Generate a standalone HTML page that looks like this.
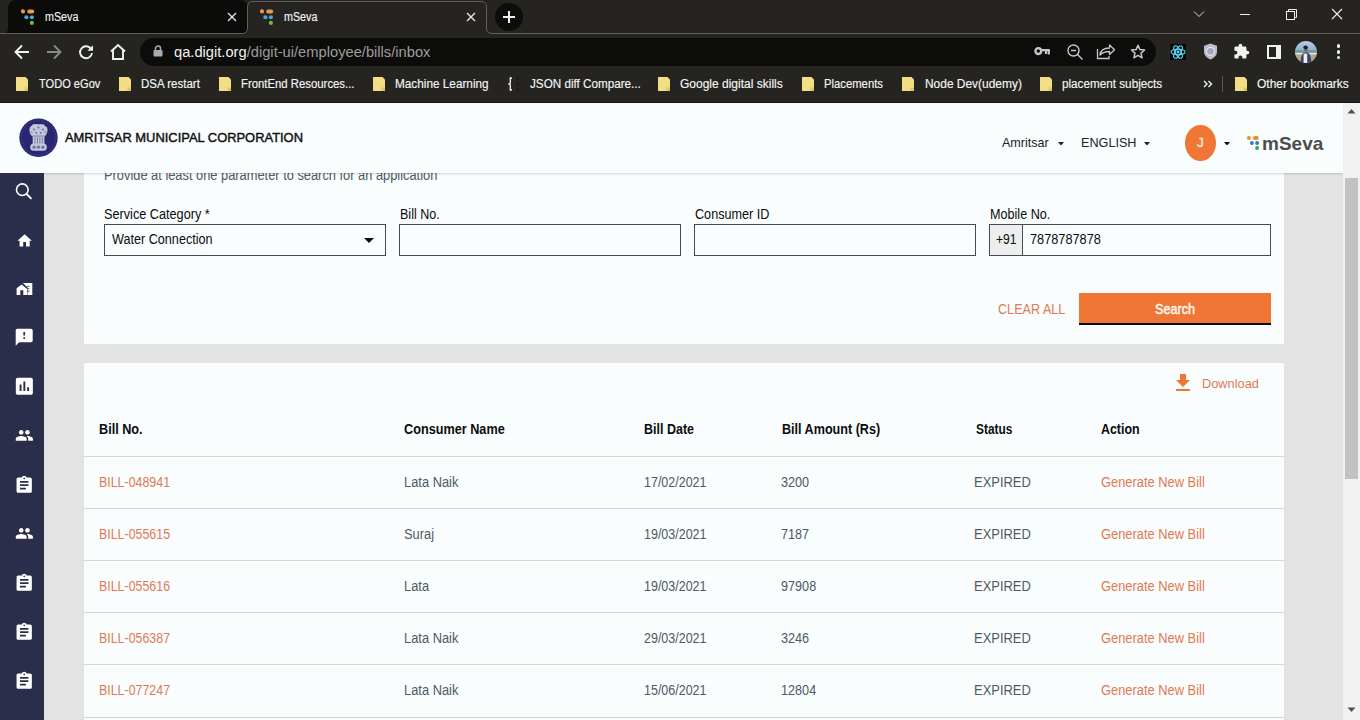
<!DOCTYPE html><html><head><meta charset="utf-8"><style>
html,body{margin:0;padding:0;}
body{width:1360px;height:720px;overflow:hidden;position:relative;background:#252420;font-family:"Liberation Sans", sans-serif;}
.t{position:absolute;line-height:1;white-space:nowrap;}
.r{position:absolute;}

</style></head><body>
<div class="r" style="left:0px;top:0px;width:1360px;height:34px;background:#252420"></div>
<div class="r" style="left:0px;top:34px;width:1360px;height:68px;background:#252420"></div>
<svg class="r" style="left:0px;top:0px;" width="1360" height="36" viewBox="0 0 1360 36"><path d="M3 33.5Q8 33.5 8 28.5V8Q8 0 16 0H240Q247.5 0 247.5 7.5V28Q247.5 33.5 242 33.5Z" fill="#0b0b0a"/><path d="M0 33.5H242Q247.5 33.5 247.5 28V7Q247.5 1.5 253 1.5H481Q486.5 1.5 486.5 7V28Q486.5 33.5 492 33.5H1360" stroke="#5f5e59" stroke-width="1" fill="none"/></svg>
<div class="r" style="left:0px;top:102px;width:1360px;height:1px;background:#161614"></div>
<svg class="r" style="left:21px;top:8px;" width="16" height="18" viewBox="0 0 16 18"><circle cx="2" cy="3.4" r="2.05" fill="#eb9a4c"/><rect x="6.2" y="1.4" width="7" height="4" rx="2" fill="#eb9a4c"/><circle cx="5.4" cy="9.2" r="2.05" fill="#4ba6dc"/><circle cx="10.9" cy="9.2" r="2.05" fill="#4ba6dc"/><circle cx="10.9" cy="14.9" r="2.05" fill="#6cbd45"/></svg>
<svg class="r" style="left:260px;top:8px;" width="16" height="18" viewBox="0 0 16 18"><circle cx="2" cy="3.4" r="2.05" fill="#eb9a4c"/><rect x="6.2" y="1.4" width="7" height="4" rx="2" fill="#eb9a4c"/><circle cx="5.4" cy="9.2" r="2.05" fill="#4ba6dc"/><circle cx="10.9" cy="9.2" r="2.05" fill="#4ba6dc"/><circle cx="10.9" cy="14.9" r="2.05" fill="#6cbd45"/></svg>
<div class="t" id="tab1" style="left:44.51px;top:10.84px;font-size:12px;color:#f0f0f0;font-weight:normal;transform:scaleX(0.8951);transform-origin:0 0;-webkit-text-stroke:0.15px #f0f0f0">mSeva</div>
<div class="t" id="tab2" style="left:283.51px;top:10.84px;font-size:12px;color:#f4f4f4;font-weight:normal;transform:scaleX(0.8951);transform-origin:0 0;-webkit-text-stroke:0.15px #f4f4f4">mSeva</div>
<svg class="r" style="left:227px;top:12px;" width="10" height="10" viewBox="0 0 10 10"><path d="M1 1L9 9M9 1L1 9" stroke="#e6e6e6" stroke-width="1.4"/></svg>
<svg class="r" style="left:466px;top:12px;" width="10" height="10" viewBox="0 0 10 10"><path d="M1 1L9 9M9 1L1 9" stroke="#e6e6e6" stroke-width="1.4"/></svg>
<svg class="r" style="left:495px;top:3px;" width="28" height="28" viewBox="0 0 28 28"><circle cx="14" cy="14" r="14" fill="#0d0d0c"/><path d="M14 8v12M8 14h12" stroke="#f0f0f0" stroke-width="2"/></svg>
<svg class="r" style="left:1193px;top:10px;" width="12" height="8" viewBox="0 0 12 8"><path d="M1 1.5L6 6.5L11 1.5" stroke="#d8d8d8" stroke-width="1" fill="none"/></svg>
<div class="r" style="left:1240px;top:14px;width:10px;height:1px;background:#f0f0f0"></div>
<svg class="r" style="left:1285px;top:8px;" width="13" height="13" viewBox="0 0 13 13"><rect x="1.5" y="3.5" width="8" height="8" stroke="#f0f0f0" fill="none"/><path d="M3.5 3.5V1.5h8v8h-2" stroke="#f0f0f0" fill="none"/></svg>
<svg class="r" style="left:1331px;top:8px;" width="12" height="12" viewBox="0 0 12 12"><path d="M1 1L11 11M11 1L1 11" stroke="#f0f0f0" stroke-width="1.1"/></svg>
<svg class="r" style="left:13px;top:43px;" width="18" height="18" viewBox="0 0 18 18"><path d="M16 9H3M9 2.5L2.5 9L9 15.5" stroke="#f2f2f2" stroke-width="1.9" fill="none"/></svg>
<svg class="r" style="left:45px;top:43px;" width="18" height="18" viewBox="0 0 18 18"><path d="M2 9H15M9 2.5L15.5 9L9 15.5" stroke="#8a8a88" stroke-width="1.9" fill="none"/></svg>
<svg class="r" style="left:77px;top:43px;" width="18" height="18" viewBox="0 0 18 18"><path d="M14.2 6.2A6 6 0 1 0 15 10" stroke="#f2f2f2" stroke-width="1.9" fill="none"/><path d="M16 2.2V7.8H10.4Z" fill="#f2f2f2"/></svg>
<svg class="r" style="left:109px;top:43px;" width="18" height="18" viewBox="0 0 18 18"><path d="M2 8.5L9 2L16 8.5M4 7V16H14V7" stroke="#f2f2f2" stroke-width="1.9" fill="none" stroke-linejoin="miter"/></svg>
<div class="r" style="left:140px;top:38px;width:1016px;height:28px;background:#0c0c0b;border-radius:14px"></div>
<svg class="r" style="left:153px;top:45px;" width="10" height="12" viewBox="0 0 10 12"><path d="M2.5 5V3.5a2.5 2.5 0 0 1 5 0V5" stroke="#a9aaad" stroke-width="1.5" fill="none"/><rect x="0.5" y="5" width="9" height="6.5" rx="1" fill="#a9aaad"/></svg>
<div class="t" id="url" style="left:174.00px;top:45.15px;font-size:14px;color:#f2f2f2;font-weight:normal;transform:scaleX(1.0492);transform-origin:0 0;"><span style="color:#f2f2f2">qa.digit.org</span><span style="color:#9d9d9b">/digit-ui/employee/bills/inbox</span></div>
<svg class="r" style="left:1034px;top:46px;" width="16" height="11" viewBox="0 0 16 11"><circle cx="4.3" cy="5.1" r="2.9" stroke="#c8c8c8" stroke-width="2.3" fill="none"/><path d="M6.5 4.2H14.8V8.5M12 4.5V8" stroke="#c8c8c8" stroke-width="2.2" fill="none"/></svg>
<svg class="r" style="left:1066px;top:43px;" width="18" height="18" viewBox="0 0 18 18"><circle cx="7.5" cy="7.5" r="5.5" stroke="#c8c8c8" stroke-width="1.4" fill="none"/><path d="M11.5 11.5L16.5 16.5M5 7.5H10" stroke="#c8c8c8" stroke-width="1.4"/></svg>
<svg class="r" style="left:1096px;top:42px;" width="20" height="18" viewBox="0 0 20 18"><path d="M1.5 7V16.5H13V14" stroke="#c8c8c8" stroke-width="1.3" fill="none"/><path d="M4 13C4.5 8 8 6 13.5 6V3L18.5 7.8L13.5 12.5V9.5C9 9.5 6.5 10.5 4 13Z" stroke="#c8c8c8" stroke-width="1.3" fill="none" stroke-linejoin="round"/></svg>
<svg class="r" style="left:1130px;top:44px;" width="16" height="16" viewBox="0 0 16 16"><path d="M8 1.2L9.9 5.6L14.6 6L11 9.1L12.1 13.8L8 11.3L3.9 13.8L5 9.1L1.4 6L6.1 5.6Z" stroke="#c8c8c8" stroke-width="1.5" fill="none" stroke-linejoin="round"/></svg>
<div class="r" style="left:1170px;top:44px;width:16px;height:16px;background:#0a0a0a"></div>
<svg class="r" style="left:1170px;top:44px;" width="16" height="16" viewBox="0 0 16 16"><g stroke="#61dafb" stroke-width="1.1" fill="none"><ellipse cx="8" cy="8" rx="7" ry="2.7"/><ellipse cx="8" cy="8" rx="7" ry="2.7" transform="rotate(60 8 8)"/><ellipse cx="8" cy="8" rx="7" ry="2.7" transform="rotate(120 8 8)"/></g><circle cx="8" cy="8" r="1.4" fill="#61dafb"/></svg>
<svg class="r" style="left:1203px;top:43px;" width="15" height="17" viewBox="0 0 15 17"><path d="M7.5 0.5L14 2.8V8.5C14 12.5 11 15 7.5 16.5C4 15 1 12.5 1 8.5V2.8Z" fill="#b9bccb"/><circle cx="7.5" cy="8.3" r="4" stroke="#e2e4ee" stroke-width="1.2" fill="#a3a7ba"/></svg>
<svg class="r" style="left:1233px;top:43px;" width="17" height="17" viewBox="0 0 24 24"><path fill="#f2f2f2" d="M20.5 11H19V7c0-1.1-.9-2-2-2h-4V3.5C13 2.12 11.880 1 10.5 1S8 2.12 8 3.5V5H4c-1.1 0-1.99.9-1.99 2v3.8H3.5c1.49 0 2.7 1.21 2.7 2.7s-1.21 2.7-2.7 2.7H2V20c0 1.1.9 2 2 2h3.8v-1.5c0-1.49 1.21-2.7 2.7-2.7 1.49 0 2.7 1.21 2.7 2.7V22H17c1.1 0 2-.9 2-2v-4h1.5c1.38 0 2.5-1.12 2.5-2.5S21.88 11 20.5 11z"/></svg>
<svg class="r" style="left:1267px;top:45px;" width="14" height="14" viewBox="0 0 14 14"><rect x="1" y="1" width="12" height="12" stroke="#f2f2f2" stroke-width="2" fill="none"/><rect x="9" y="1" width="4" height="12" fill="#f2f2f2"/></svg>
<svg class="r" style="left:1295px;top:41px;" width="22" height="22" viewBox="0 0 22 22"><defs><clipPath id="pc"><circle cx="11" cy="11" r="11"/></clipPath><linearGradient id="sky" x1="0" y1="0" x2="0" y2="1"><stop offset="0" stop-color="#b4cde8"/><stop offset="1" stop-color="#8fb0cf"/></linearGradient></defs><g clip-path="url(#pc)"><rect width="22" height="10" fill="url(#sky)"/><rect y="9" width="22" height="2.6" fill="#6f9ca2"/><rect y="11.6" width="22" height="2.2" fill="#e6ecee"/><rect y="13.8" width="22" height="8.2" fill="#b3a58f"/><path d="M5.6 22C5.8 15.5 6.8 12.2 9.3 11.4H12.4C15 12.2 16 15.5 16.4 22Z" fill="#3b4670"/><rect x="8.6" y="12.6" width="3.6" height="9.4" fill="#eeeeee"/><ellipse cx="10.9" cy="8.6" rx="1.7" ry="2.1" fill="#7a6458"/><ellipse cx="10.6" cy="6.4" rx="2.3" ry="1.8" fill="#25201d"/></g></svg>
<div class="r" style="left:1336.5px;top:44.4px;width:3.2px;height:3.2px;border-radius:50%;background:#f2f2f2"></div>
<div class="r" style="left:1336.5px;top:50.4px;width:3.2px;height:3.2px;border-radius:50%;background:#f2f2f2"></div>
<div class="r" style="left:1336.5px;top:55.9px;width:3.2px;height:3.2px;border-radius:50%;background:#f2f2f2"></div>
<svg class="r" style="left:16px;top:77px;" width="12" height="14" viewBox="0 0 12 14"><path d="M0 0H9.5L12 2.5V14H0Z" fill="#f3dd85"/><path d="M8.5 10.5H12V14H8.5Z" fill="#e0c468"/></svg>
<div class="t" id="bm0" style="left:39.36px;top:77.84px;font-size:12px;color:#f4f4f4;font-weight:normal;transform:scaleX(0.9228);transform-origin:0 0;-webkit-text-stroke:0.15px #f4f4f4">TODO eGov</div>
<svg class="r" style="left:119px;top:77px;" width="12" height="14" viewBox="0 0 12 14"><path d="M0 0H9.5L12 2.5V14H0Z" fill="#f3dd85"/><path d="M8.5 10.5H12V14H8.5Z" fill="#e0c468"/></svg>
<div class="t" id="bm1" style="left:141.00px;top:77.84px;font-size:12px;color:#f4f4f4;font-weight:normal;transform:scaleX(0.9598);transform-origin:0 0;-webkit-text-stroke:0.15px #f4f4f4">DSA restart</div>
<svg class="r" style="left:219px;top:77px;" width="12" height="14" viewBox="0 0 12 14"><path d="M0 0H9.5L12 2.5V14H0Z" fill="#f3dd85"/><path d="M8.5 10.5H12V14H8.5Z" fill="#e0c468"/></svg>
<div class="t" id="bm2" style="left:241.24px;top:77.84px;font-size:12px;color:#f4f4f4;font-weight:normal;transform:scaleX(0.9454);transform-origin:0 0;-webkit-text-stroke:0.15px #f4f4f4">FrontEnd Resources...</div>
<svg class="r" style="left:373px;top:77px;" width="12" height="14" viewBox="0 0 12 14"><path d="M0 0H9.5L12 2.5V14H0Z" fill="#f3dd85"/><path d="M8.5 10.5H12V14H8.5Z" fill="#e0c468"/></svg>
<div class="t" id="bm3" style="left:395.01px;top:77.84px;font-size:12px;color:#f4f4f4;font-weight:normal;transform:scaleX(0.9816);transform-origin:0 0;-webkit-text-stroke:0.15px #f4f4f4">Machine Learning</div>
<div class="t" id="bm4" style="left:530.00px;top:77.84px;font-size:12px;color:#f4f4f4;font-weight:normal;transform:scaleX(0.9735);transform-origin:0 0;-webkit-text-stroke:0.15px #f4f4f4">JSON diff Compare...</div>
<svg class="r" style="left:658px;top:77px;" width="12" height="14" viewBox="0 0 12 14"><path d="M0 0H9.5L12 2.5V14H0Z" fill="#f3dd85"/><path d="M8.5 10.5H12V14H8.5Z" fill="#e0c468"/></svg>
<div class="t" id="bm5" style="left:680.00px;top:77.84px;font-size:12px;color:#f4f4f4;font-weight:normal;-webkit-text-stroke:0.15px #f4f4f4">Google digital skills</div>
<svg class="r" style="left:802px;top:77px;" width="12" height="14" viewBox="0 0 12 14"><path d="M0 0H9.5L12 2.5V14H0Z" fill="#f3dd85"/><path d="M8.5 10.5H12V14H8.5Z" fill="#e0c468"/></svg>
<div class="t" id="bm6" style="left:824.02px;top:77.84px;font-size:12px;color:#f4f4f4;font-weight:normal;transform:scaleX(0.9398);transform-origin:0 0;-webkit-text-stroke:0.15px #f4f4f4">Placements</div>
<svg class="r" style="left:902px;top:77px;" width="12" height="14" viewBox="0 0 12 14"><path d="M0 0H9.5L12 2.5V14H0Z" fill="#f3dd85"/><path d="M8.5 10.5H12V14H8.5Z" fill="#e0c468"/></svg>
<div class="t" id="bm7" style="left:925.00px;top:77.84px;font-size:12px;color:#f4f4f4;font-weight:normal;transform:scaleX(0.9949);transform-origin:0 0;-webkit-text-stroke:0.15px #f4f4f4">Node Dev(udemy)</div>
<svg class="r" style="left:1040px;top:77px;" width="12" height="14" viewBox="0 0 12 14"><path d="M0 0H9.5L12 2.5V14H0Z" fill="#f3dd85"/><path d="M8.5 10.5H12V14H8.5Z" fill="#e0c468"/></svg>
<div class="t" id="bm8" style="left:1062.01px;top:77.84px;font-size:12px;color:#f4f4f4;font-weight:normal;transform:scaleX(0.9756);transform-origin:0 0;-webkit-text-stroke:0.15px #f4f4f4">placement subjects</div>
<svg class="r" style="left:1235px;top:77px;" width="12" height="14" viewBox="0 0 12 14"><path d="M0 0H9.5L12 2.5V14H0Z" fill="#f3dd85"/><path d="M8.5 10.5H12V14H8.5Z" fill="#e0c468"/></svg>
<div class="t" id="bm9" style="left:1257.00px;top:77.84px;font-size:12px;color:#f4f4f4;font-weight:normal;transform:scaleX(0.9973);transform-origin:0 0;-webkit-text-stroke:0.15px #f4f4f4">Other bookmarks</div>
<svg class="r" style="left:508px;top:77px;" width="12" height="14" viewBox="0 0 12 14"><path d="M4 1H2.3V6.2L1 7L2.3 7.8V13H4" stroke="#f2f2f2" stroke-width="1.3" fill="none"/><g fill="#000"><rect x="9" y="1.2" width="1.2" height="1.2"/><rect x="9" y="6.5" width="1.2" height="1.2"/><rect x="9" y="12" width="1.2" height="1.2"/></g></svg>
<svg class="r" style="left:1203px;top:80px;" width="10" height="8" viewBox="0 0 10 8"><path d="M1 1L4 4L1 7M5.5 1L8.5 4L5.5 7" stroke="#f0f0f0" stroke-width="1.4" fill="none"/></svg>
<div class="r" style="left:1222px;top:76px;width:1px;height:16px;background:#5a5955"></div>
<div class="r" style="left:0px;top:103px;width:1343px;height:617px;background:#e3e3e3"></div>
<div class="r" style="left:84px;top:103px;width:1200px;height:241px;background:#f9fdfe"></div>
<div class="t" id="provide" style="left:104.18px;top:168.15px;font-size:14px;color:#505a5f;font-weight:normal;transform:scaleX(0.9171);transform-origin:0 0;">Provide at least one parameter to search for an application</div>
<div class="t" id="lab0" style="left:104.00px;top:207.15px;font-size:14px;color:#0b0c0c;font-weight:normal;transform:scaleX(0.9060);transform-origin:0 0;">Service Category *</div>
<div class="t" id="lab1" style="left:399.64px;top:207.15px;font-size:14px;color:#0b0c0c;font-weight:normal;transform:scaleX(0.8954);transform-origin:0 0;">Bill No.</div>
<div class="t" id="lab2" style="left:694.64px;top:207.15px;font-size:14px;color:#0b0c0c;font-weight:normal;transform:scaleX(0.9025);transform-origin:0 0;">Consumer ID</div>
<div class="t" id="lab3" style="left:989.64px;top:207.15px;font-size:14px;color:#0b0c0c;font-weight:normal;transform:scaleX(0.9015);transform-origin:0 0;">Mobile No.</div>
<div class="r" style="left:104px;top:224px;width:282px;height:32px;border:1px solid #464b4f;box-sizing:border-box"></div>
<div class="r" style="left:399px;top:224px;width:282px;height:32px;border:1px solid #464b4f;box-sizing:border-box"></div>
<div class="r" style="left:694px;top:224px;width:282px;height:32px;border:1px solid #464b4f;box-sizing:border-box"></div>
<div class="r" style="left:989px;top:224px;width:282px;height:32px;border:1px solid #464b4f;box-sizing:border-box"></div>
<div class="t" id="water" style="left:111.95px;top:232.15px;font-size:14px;color:#0b0c0c;font-weight:normal;transform:scaleX(0.9018);transform-origin:0 0;">Water Connection</div>
<svg class="r" style="left:364px;top:238px;" width="10" height="5" viewBox="0 0 10 5"><path d="M0 0H10L5 5Z" fill="#0b0c0c"/></svg>
<div class="r" style="left:990px;top:225px;width:32px;height:30px;background:#eeeeee;border-right:1px solid #464b4f"></div>
<div class="t" id="p91" style="left:996.00px;top:232.15px;font-size:14px;color:#0b0c0c;font-weight:normal;transform:scaleX(0.8655);transform-origin:0 0;">+91</div>
<div class="t" id="mob" style="left:1030.01px;top:232.15px;font-size:14px;color:#0b0c0c;font-weight:normal;transform:scaleX(0.9103);transform-origin:0 0;">7878787878</div>
<div class="t" id="clear" style="left:998.48px;top:300.80px;font-size:15px;color:#e07a52;font-weight:normal;transform:scaleX(0.8413);transform-origin:0 0;">CLEAR ALL</div>
<div class="r" style="left:1079px;top:293px;width:192px;height:32px;background:#f07636;border-bottom:2px solid #0b0c0c;box-sizing:border-box"></div>
<div class="t" id="search" style="left:1155.00px;top:301.00px;font-size:15px;color:#fff8f0;font-weight:normal;transform:scaleX(0.8417);transform-origin:0 0;-webkit-text-stroke:0.5px #fff8f0">Search</div>
<div class="r" style="left:84px;top:363px;width:1200px;height:357px;background:#f9fdfe"></div>
<svg class="r" style="left:1171px;top:371px;" width="24" height="24" viewBox="0 0 24 24"><path fill="#f07636" d="M19 9h-4V3H9v6H5l7 7 7-7zM5 18v2h14v-2H5z"/></svg>
<div class="t" id="download" style="left:1201.99px;top:377.84px;font-size:12px;color:#e07a52;font-weight:normal;transform:scaleX(1.0664);transform-origin:0 0;">Download</div>
<div class="t" id="h0" style="left:99.45px;top:422.15px;font-size:14px;color:#0b0c0c;font-weight:bold;transform:scaleX(0.9045);transform-origin:0 0;">Bill No.</div>
<div class="t" id="h1" style="left:404.23px;top:422.15px;font-size:14px;color:#0b0c0c;font-weight:bold;transform:scaleX(0.9055);transform-origin:0 0;">Consumer Name</div>
<div class="t" id="h2" style="left:643.82px;top:422.15px;font-size:14px;color:#0b0c0c;font-weight:bold;transform:scaleX(0.8929);transform-origin:0 0;">Bill Date</div>
<div class="t" id="h3" style="left:782.05px;top:422.15px;font-size:14px;color:#0b0c0c;font-weight:bold;transform:scaleX(0.8991);transform-origin:0 0;">Bill Amount (Rs)</div>
<div class="t" id="h4" style="left:975.74px;top:422.15px;font-size:14px;color:#0b0c0c;font-weight:bold;transform:scaleX(0.8491);transform-origin:0 0;">Status</div>
<div class="t" id="h5" style="left:1101.18px;top:422.15px;font-size:14px;color:#0b0c0c;font-weight:bold;transform:scaleX(0.8867);transform-origin:0 0;">Action</div>
<div class="r" style="left:84px;top:456px;width:1200px;height:1px;background:#d6d5d4"></div>
<div class="r" style="left:84px;top:508px;width:1200px;height:1px;background:#d6d5d4"></div>
<div class="r" style="left:84px;top:560px;width:1200px;height:1px;background:#d6d5d4"></div>
<div class="r" style="left:84px;top:612px;width:1200px;height:1px;background:#d6d5d4"></div>
<div class="r" style="left:84px;top:664px;width:1200px;height:1px;background:#d6d5d4"></div>
<div class="r" style="left:84px;top:717px;width:1200px;height:1px;background:#d6d5d4"></div>
<div class="t" id="c0" style="left:99.24px;top:475.15px;font-size:14px;color:#e07a52;font-weight:normal;transform:scaleX(0.8862);transform-origin:0 0;">BILL-048941</div>
<div class="t" id="c1" style="left:404.23px;top:475.15px;font-size:14px;color:#505a5f;font-weight:normal;transform:scaleX(0.9201);transform-origin:0 0;">Lata Naik</div>
<div class="t" id="c2" style="left:644.27px;top:475.15px;font-size:14px;color:#505a5f;font-weight:normal;transform:scaleX(0.8914);transform-origin:0 0;">17/02/2021</div>
<div class="t" id="c3" style="left:781.22px;top:475.15px;font-size:14px;color:#505a5f;font-weight:normal;transform:scaleX(0.9037);transform-origin:0 0;">3200</div>
<div class="t" id="c4" style="left:974.06px;top:475.15px;font-size:14px;color:#505a5f;font-weight:normal;transform:scaleX(0.9252);transform-origin:0 0;">EXPIRED</div>
<div class="t" id="c5" style="left:1101.00px;top:475.15px;font-size:14px;color:#e07a52;font-weight:normal;transform:scaleX(0.9197);transform-origin:0 0;">Generate New Bill</div>
<div class="t" id="r1c0" style="left:99.24px;top:527.15px;font-size:14px;color:#e07a52;font-weight:normal;transform:scaleX(0.8862);transform-origin:0 0;">BILL-055615</div>
<div class="t" id="r1c1" style="left:404.23px;top:527.15px;font-size:14px;color:#505a5f;font-weight:normal;transform:scaleX(0.9201);transform-origin:0 0;">Suraj</div>
<div class="t" id="r1c2" style="left:644.27px;top:527.15px;font-size:14px;color:#505a5f;font-weight:normal;transform:scaleX(0.8914);transform-origin:0 0;">19/03/2021</div>
<div class="t" id="r1c3" style="left:781.22px;top:527.15px;font-size:14px;color:#505a5f;font-weight:normal;transform:scaleX(0.9037);transform-origin:0 0;">7187</div>
<div class="t" id="r1c4" style="left:974.06px;top:527.15px;font-size:14px;color:#505a5f;font-weight:normal;transform:scaleX(0.9252);transform-origin:0 0;">EXPIRED</div>
<div class="t" id="r1c5" style="left:1101.00px;top:527.15px;font-size:14px;color:#e07a52;font-weight:normal;transform:scaleX(0.9197);transform-origin:0 0;">Generate New Bill</div>
<div class="t" id="r2c0" style="left:99.24px;top:579.15px;font-size:14px;color:#e07a52;font-weight:normal;transform:scaleX(0.8862);transform-origin:0 0;">BILL-055616</div>
<div class="t" id="r2c1" style="left:404.23px;top:579.15px;font-size:14px;color:#505a5f;font-weight:normal;transform:scaleX(0.9201);transform-origin:0 0;">Lata</div>
<div class="t" id="r2c2" style="left:644.27px;top:579.15px;font-size:14px;color:#505a5f;font-weight:normal;transform:scaleX(0.8914);transform-origin:0 0;">19/03/2021</div>
<div class="t" id="r2c3" style="left:781.22px;top:579.15px;font-size:14px;color:#505a5f;font-weight:normal;transform:scaleX(0.9037);transform-origin:0 0;">97908</div>
<div class="t" id="r2c4" style="left:974.06px;top:579.15px;font-size:14px;color:#505a5f;font-weight:normal;transform:scaleX(0.9252);transform-origin:0 0;">EXPIRED</div>
<div class="t" id="r2c5" style="left:1101.00px;top:579.15px;font-size:14px;color:#e07a52;font-weight:normal;transform:scaleX(0.9197);transform-origin:0 0;">Generate New Bill</div>
<div class="t" id="r3c0" style="left:99.24px;top:631.15px;font-size:14px;color:#e07a52;font-weight:normal;transform:scaleX(0.8862);transform-origin:0 0;">BILL-056387</div>
<div class="t" id="r3c1" style="left:404.23px;top:631.15px;font-size:14px;color:#505a5f;font-weight:normal;transform:scaleX(0.9201);transform-origin:0 0;">Lata Naik</div>
<div class="t" id="r3c2" style="left:644.27px;top:631.15px;font-size:14px;color:#505a5f;font-weight:normal;transform:scaleX(0.8914);transform-origin:0 0;">29/03/2021</div>
<div class="t" id="r3c3" style="left:781.22px;top:631.15px;font-size:14px;color:#505a5f;font-weight:normal;transform:scaleX(0.9037);transform-origin:0 0;">3246</div>
<div class="t" id="r3c4" style="left:974.06px;top:631.15px;font-size:14px;color:#505a5f;font-weight:normal;transform:scaleX(0.9252);transform-origin:0 0;">EXPIRED</div>
<div class="t" id="r3c5" style="left:1101.00px;top:631.15px;font-size:14px;color:#e07a52;font-weight:normal;transform:scaleX(0.9197);transform-origin:0 0;">Generate New Bill</div>
<div class="t" id="r4c0" style="left:99.24px;top:683.15px;font-size:14px;color:#e07a52;font-weight:normal;transform:scaleX(0.8862);transform-origin:0 0;">BILL-077247</div>
<div class="t" id="r4c1" style="left:404.23px;top:683.15px;font-size:14px;color:#505a5f;font-weight:normal;transform:scaleX(0.9201);transform-origin:0 0;">Lata Naik</div>
<div class="t" id="r4c2" style="left:644.27px;top:683.15px;font-size:14px;color:#505a5f;font-weight:normal;transform:scaleX(0.8914);transform-origin:0 0;">15/06/2021</div>
<div class="t" id="r4c3" style="left:781.22px;top:683.15px;font-size:14px;color:#505a5f;font-weight:normal;transform:scaleX(0.9037);transform-origin:0 0;">12804</div>
<div class="t" id="r4c4" style="left:974.06px;top:683.15px;font-size:14px;color:#505a5f;font-weight:normal;transform:scaleX(0.9252);transform-origin:0 0;">EXPIRED</div>
<div class="t" id="r4c5" style="left:1101.00px;top:683.15px;font-size:14px;color:#e07a52;font-weight:normal;transform:scaleX(0.9197);transform-origin:0 0;">Generate New Bill</div>
<div class="r" style="left:0px;top:103px;width:1343px;height:70px;background:#f9fdfe;box-shadow:0 1px 2px rgba(0,0,0,0.16)"></div>
<svg class="r" style="left:17px;top:117px;" width="44" height="42" viewBox="0 0 44 42"><circle cx="21.5" cy="20.75" r="19.2" fill="#2a2771"/><circle cx="21.5" cy="20.75" r="17.3" stroke="#5a5aa8" stroke-width="0.8" stroke-dasharray="1.2 1.6" fill="none" opacity="0.8"/><g fill="#c6c7dc"><path d="M12.5 13.5C12.3 10.5 13.5 9 15.2 8.6C15.6 7 17.5 6.8 18.5 7.4C19.5 6.6 21.2 6.8 21.6 7.6C22.2 6.8 24 6.6 24.8 7.5C26 7 27.6 7.6 27.8 9C29.5 9.3 30.7 10.8 30.5 13.5C30.3 16.3 28.8 18.6 27.5 19.5H15.5C14 18.6 12.7 16.3 12.5 13.5Z"/><rect x="15.7" y="19" width="11.7" height="8.5"/><rect x="13.2" y="26.5" width="16.6" height="7.3" rx="3.6"/></g><g fill="#6d6c9e" opacity="0.9"><circle cx="17" cy="12.5" r="1.1"/><circle cx="21.5" cy="10.5" r="1.1"/><circle cx="26" cy="12.5" r="1.1"/><circle cx="19.3" cy="15.8" r="1"/><circle cx="23.7" cy="15.8" r="1"/><circle cx="14.8" cy="15" r="0.8"/><circle cx="28.2" cy="15" r="0.8"/><rect x="15.5" y="18.6" width="12" height="0.9"/><rect x="17.6" y="20.5" width="0.9" height="6"/><rect x="20" y="20.5" width="0.9" height="6"/><rect x="22.4" y="20.5" width="0.9" height="6"/><rect x="24.8" y="20.5" width="0.9" height="6"/><rect x="15.5" y="28.7" width="3.2" height="3" rx="1"/><rect x="19.8" y="28.5" width="3.4" height="3.3" rx="1.6"/><rect x="24.3" y="28.7" width="3.2" height="3" rx="1"/></g></svg>
<div class="t" id="corp" style="left:64.56px;top:131.37px;font-size:13.5px;color:#111111;font-weight:normal;transform:scaleX(0.9567);transform-origin:0 0;-webkit-text-stroke:0.45px #111111">AMRITSAR MUNICIPAL CORPORATION</div>
<div class="t" id="city" style="left:1001.96px;top:135.57px;font-size:13.5px;color:#222222;font-weight:normal;transform:scaleX(0.9266);transform-origin:0 0;">Amritsar</div>
<div class="t" id="lang" style="left:1080.61px;top:135.57px;font-size:13.5px;color:#222222;font-weight:normal;transform:scaleX(0.9358);transform-origin:0 0;">ENGLISH</div>
<svg class="r" style="left:1057.5px;top:142px;" width="6" height="3.5" viewBox="0 0 6 3.5"><path d="M0 0H6L3 3.5Z" fill="#222"/></svg>
<svg class="r" style="left:1144px;top:142px;" width="6" height="3.5" viewBox="0 0 6 3.5"><path d="M0 0H6L3 3.5Z" fill="#222"/></svg>
<div class="r" style="left:1185px;top:125px;width:31px;height:36px;border-radius:50%;background:#f07636"></div>
<div class="t" id="t64" style="left:1197.00px;top:135.57px;font-size:13.5px;color:#fdebd0;font-weight:normal;-webkit-text-stroke:0.4px #fdebd0">J</div>
<svg class="r" style="left:1224px;top:141.5px;" width="6" height="3.5" viewBox="0 0 6 3.5"><path d="M0 0H6L3 3.5Z" fill="#0b0c0c"/></svg>
<svg class="r" style="left:1246px;top:135px;" width="16" height="17" viewBox="0 0 16 17"><circle cx="2.9" cy="2.9" r="2" fill="#ee8c2c"/><rect x="6.9" y="1" width="5.9" height="3.9" rx="1.95" fill="#ee8c2c"/><circle cx="5.9" cy="8" r="2" fill="#3b78c0"/><circle cx="11.1" cy="8" r="2" fill="#3b78c0"/><circle cx="11.1" cy="13.05" r="1.95" fill="#2ea84a"/></svg>
<div class="t" id="logo" style="left:1262.00px;top:133.67px;font-size:19px;color:#4d4d4d;font-weight:bold;">mSeva</div>
<div class="r" style="left:0px;top:173px;width:44px;height:547px;background:#2a2e4b"></div>
<svg class="r" style="left:13px;top:181px;" width="22" height="22" viewBox="0 0 22 22"><circle cx="9.3" cy="8.7" r="5.8" stroke="#fff" stroke-width="1.6" fill="none"/><path d="M13.6 13L18.5 17.8" stroke="#fff" stroke-width="1.8"/></svg>
<svg class="r" style="left:15.66px;top:231.7px;" width="17.3" height="17.3" viewBox="0 0 24 24"><path fill="#ffffff" d="M10 20v-6h4v6h5v-8h3L12 3 2 12h3v8z"/></svg>
<svg class="r" style="left:12px;top:278px;" width="24" height="22" viewBox="0 0 24 22"><path fill="#fff" d="M10.9 4.9H20.3V17H15.6V9.4Z"/><path fill="#fff" d="M4.6 17V10.2L9.6 6.6L15.2 11.1V17H11.3V12.2H8.3V17Z"/><path stroke="#2a2e4b" stroke-width="0.9" d="M15.2 8.3H17.4M15.2 10.8H17.4M15.2 13.3H17.4"/></svg>
<svg class="r" style="left:14.1px;top:327.3px;" width="20.4" height="20.4" viewBox="0 0 24 24"><path fill="#ffffff" d="M20 2H4c-1.1 0-1.99.9-1.99 2L2 22l4-4h14c1.1 0 2-.9 2-2V4c0-1.1-.9-2-2-2zm-7 12h-2v-2h2v2zm0-4h-2V6h2v4z"/></svg>
<svg class="r" style="left:13px;top:375px;" width="22.7" height="22.7" viewBox="0 0 24 24"><path fill="#ffffff" d="M19 3H5c-1.1 0-2 .9-2 2v14c0 1.1.9 2 2 2h14c1.1 0 2-.9 2-2V5c0-1.1-.9-2-2-2zM9 17H7v-7h2v7zm4 0h-2V7h2v10zm4 0h-2v-4h2v4z"/></svg>
<svg class="r" style="left:15px;top:426.1px;" width="18.7" height="18.7" viewBox="0 0 24 24"><path fill="#ffffff" d="M16 11c1.66 0 2.99-1.34 2.99-3S17.66 5 16 5c-1.66 0-3 1.340-3 3s1.34 3 3 3zm-8 0c1.66 0 2.99-1.34 2.99-3S9.66 5 8 5C6.34 5 5 6.34 5 8s1.34 3 3 3zm0 2c-2.33 0-7 1.17-7 3.5V19h14v-2.5c0-2.33-4.67-3.5-7-3.5zm8 0c-.29 0-.62.02-.97.05 1.16.84 1.97 1.97 1.97 3.45V19h6v-2.5c0-2.33-4.67-3.5-7-3.5z"/></svg>
<svg class="r" style="left:14.35px;top:475.25px;" width="20.4" height="20.4" viewBox="0 0 24 24"><path fill="#ffffff" d="M19 3h-4.18C14.4 1.84 13.3 1 12 1c-1.3 0-2.4.84-2.82 2H5c-1.1 0-2 .9-2 2v14c0 1.1.9 2 2 2h14c1.1 0 2-.9 2-2V5c0-1.1-.9-2-2-2zm-7 0c.55 0 1 .45 1 1s-.45 1-1 1-1-.45-1-1 .45-1 1-1zm2 14H7v-2h7v2zm3-4H7v-2h10v2zm0-4H7V7h10v2z"/></svg>
<svg class="r" style="left:15px;top:523.9px;" width="18.7" height="18.7" viewBox="0 0 24 24"><path fill="#ffffff" d="M16 11c1.66 0 2.99-1.34 2.99-3S17.66 5 16 5c-1.66 0-3 1.340-3 3s1.34 3 3 3zm-8 0c1.66 0 2.99-1.34 2.99-3S9.66 5 8 5C6.34 5 5 6.34 5 8s1.34 3 3 3zm0 2c-2.33 0-7 1.17-7 3.5V19h14v-2.5c0-2.33-4.67-3.5-7-3.5zm8 0c-.29 0-.62.02-.97.05 1.16.84 1.97 1.97 1.97 3.45V19h6v-2.5c0-2.33-4.67-3.5-7-3.5z"/></svg>
<svg class="r" style="left:14.35px;top:572.5px;" width="20.4" height="20.4" viewBox="0 0 24 24"><path fill="#ffffff" d="M19 3h-4.18C14.4 1.84 13.3 1 12 1c-1.3 0-2.4.84-2.82 2H5c-1.1 0-2 .9-2 2v14c0 1.1.9 2 2 2h14c1.1 0 2-.9 2-2V5c0-1.1-.9-2-2-2zm-7 0c.55 0 1 .45 1 1s-.45 1-1 1-1-.45-1-1 .45-1 1-1zm2 14H7v-2h7v2zm3-4H7v-2h10v2zm0-4H7V7h10v2z"/></svg>
<svg class="r" style="left:14.35px;top:621.5px;" width="20.4" height="20.4" viewBox="0 0 24 24"><path fill="#ffffff" d="M19 3h-4.18C14.4 1.84 13.3 1 12 1c-1.3 0-2.4.84-2.82 2H5c-1.1 0-2 .9-2 2v14c0 1.1.9 2 2 2h14c1.1 0 2-.9 2-2V5c0-1.1-.9-2-2-2zm-7 0c.55 0 1 .45 1 1s-.45 1-1 1-1-.45-1-1 .45-1 1-1zm2 14H7v-2h7v2zm3-4H7v-2h10v2zm0-4H7V7h10v2z"/></svg>
<svg class="r" style="left:14.35px;top:670.5px;" width="20.4" height="20.4" viewBox="0 0 24 24"><path fill="#ffffff" d="M19 3h-4.18C14.4 1.84 13.3 1 12 1c-1.3 0-2.4.84-2.82 2H5c-1.1 0-2 .9-2 2v14c0 1.1.9 2 2 2h14c1.1 0 2-.9 2-2V5c0-1.1-.9-2-2-2zm-7 0c.55 0 1 .45 1 1s-.45 1-1 1-1-.45-1-1 .45-1 1-1zm2 14H7v-2h7v2zm3-4H7v-2h10v2zm0-4H7V7h10v2z"/></svg>
<div class="r" style="left:1343px;top:103px;width:17px;height:617px;background:#f1f1f1"></div>
<svg class="r" style="left:1347px;top:108px;" width="9" height="6" viewBox="0 0 9 6"><path d="M0.5 5.5L4.5 1L8.5 5.5Z" fill="#505050"/></svg>
<svg class="r" style="left:1347px;top:707px;" width="9" height="6" viewBox="0 0 9 6"><path d="M0.5 0.5L4.5 5L8.5 0.5Z" fill="#505050"/></svg>
<div class="r" style="left:1345px;top:178px;width:13px;height:301px;background:#c1c1c1"></div>
</body></html>
